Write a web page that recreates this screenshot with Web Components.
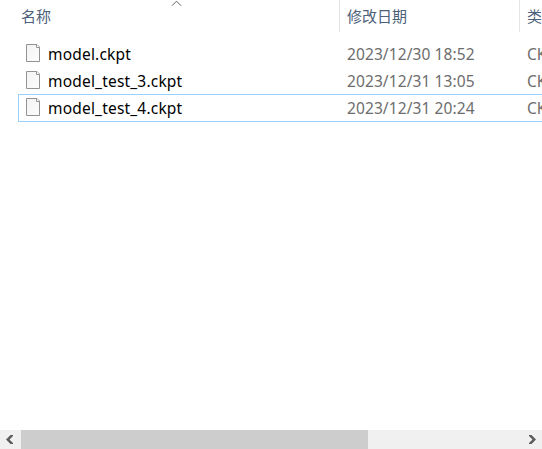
<!DOCTYPE html>
<html lang="zh-CN"><head><meta charset="utf-8"><title>文件列表</title>
<style>html,body{margin:0;height:100%;overflow:hidden;background:#fff}</style></head>
<body>
<file-explorer>
<file-header slot="header"></file-header>
<file-row date="2023/12/30 18:52" type="CK">model.ckpt</file-row>
<file-row date="2023/12/31 13:05" type="CK">model_test_3.ckpt</file-row>
<file-row date="2023/12/31 20:24" type="CK" focused>model_test_4.ckpt</file-row>
<h-scrollbar slot="footer"></h-scrollbar>
</file-explorer>
<script>
const define = (name, html, setup) => customElements.define(name, class extends HTMLElement {
  constructor() {
    super();
    this.attachShadow({mode: 'open'}).innerHTML = html;
  }
  connectedCallback() { if (setup) setup(this, this.shadowRoot); }
});

define('file-explorer', `<style>
:host{display:flex;flex-direction:column;height:449px;width:542px;overflow:hidden;background:#fff;font-family:"Noto Sans","Noto Sans CJK SC",sans-serif}
main{flex:1;padding:8px 0 0 18px;min-height:0}
</style><slot name="header"></slot><main><slot></slot></main><slot name="footer"></slot>`);

define('file-header', `<style>
:host{display:grid;grid-template-columns:339px 180px 23px;height:32px;color:#4c607a;font:15px/32px "Noto Sans CJK SC",sans-serif;position:relative}
span{white-space:nowrap;overflow:hidden;box-sizing:border-box;border-left:1px solid #e5e5e5;padding-left:7px}
span.first{border:0;padding-left:21px}
svg{position:absolute;left:171px;top:0}
</style><span class="first">名称</span><span>修改日期</span><span>类</span>
<svg width="11" height="7" fill="none" stroke="#606060"><path d="M1 5.7 5.5 1.2 10 5.7"/></svg>`);

define('file-icon', `<style>:host{display:block;width:16px;height:20px}svg{display:block}</style>
<svg width="16" height="20"><defs><linearGradient id="g" x2="1" y2="1"><stop stop-color="#f3f3f3"/><stop offset="1" stop-color="#fcfcfc"/></linearGradient></defs>
<path d="M1.5 1.5H12L14.5 4V18.5H1.5Z" fill="url(#g)" stroke="#929292"/><path d="M11.5 1.5V4.5H14.5" fill="#fff" stroke="#929292"/></svg>`);

define('file-row', `<style>
:host{display:grid;grid-template-columns:28px 293px 180px 22px;height:27px;box-sizing:border-box;border:1px solid transparent;border-right:0;font-size:15.5px;line-height:27px;color:#6d6d6d;white-space:nowrap}
:host([focused]){height:28px;border-color:#99d1ff}
file-icon{margin:2px 0 0 6px}
.name{color:#000;letter-spacing:.19px;padding-left:1px}
.date{padding-left:7px;letter-spacing:.1px}.type{padding-left:7px;overflow:hidden}
</style><file-icon></file-icon><span class="name"><slot></slot></span><span class="date"></span><span class="type"></span>`, (el, root) => {
  root.querySelector('.date').textContent = el.getAttribute('date');
  root.querySelector('.type').textContent = el.getAttribute('type');
});

define('h-scrollbar', `<style>
:host{display:grid;grid-template-columns:21px 347px 1fr 21px;height:19px;background:#f0f0f0}
.thumb{background:#cdcdcd}svg{display:block}
</style><svg width="21" height="19" fill="#5c5c5c"><path d="M10.5 5H13V6L9.5 9.5 13 13V14H10.5L6 9.5Z"/></svg>
<div class="thumb"></div><div></div>
<svg width="21" height="19" fill="#5c5c5c"><path d="M10.5 5H8V6L11.5 9.5 8 13V14H10.5L15 9.5Z"/></svg>`);
</script>
</body></html>
